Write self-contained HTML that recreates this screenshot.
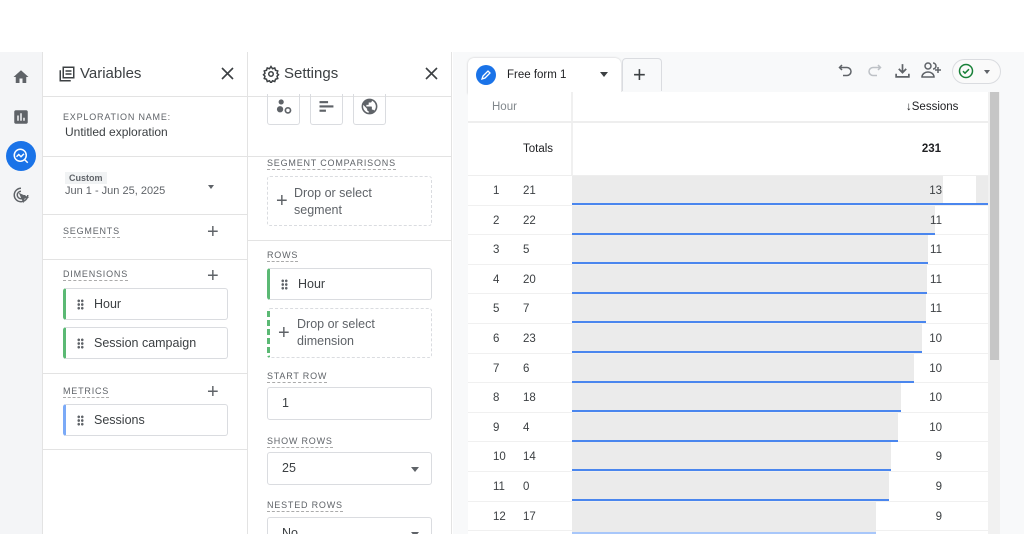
<!DOCTYPE html>
<html style="overflow:hidden;width:1024px;height:534px"><head><meta charset="utf-8"><style>
*{box-sizing:border-box;margin:0;padding:0}
body{width:1024px;height:534px;overflow:hidden;background:#fff;font-family:"Liberation Sans",Arial,sans-serif;color:#202124;position:relative}
.abs{position:absolute}
.rail{left:0;top:52px;width:43px;height:482px;background:#f4f5f7;border-right:1px solid #e3e3e3}
.panel{top:52px;height:482px;background:#fff;border-right:1px solid #e3e3e3;overflow:hidden}
.hdr{height:45px;border-bottom:1px solid #e3e3e3}
.lbl{font-size:9px;letter-spacing:.8px;color:#5f6368;border-bottom:1px dashed #aaa;display:inline-block;padding-bottom:1px}
.chip{position:absolute;height:32px;border:1px solid #dadce0;border-radius:3px;background:#fff;font-size:12.5px;color:#3c4043;line-height:30px;padding-left:28px}
.chip .dots{position:absolute;left:11px;top:10px;width:7px;height:11px;background:radial-gradient(circle,#5f6368 1.2px,transparent 1.4px) 0 0/3.5px 3.7px}
.sep{position:absolute;left:0;right:0;height:1px;background:#e3e3e3}
.plus{position:absolute;font-size:20px;color:#5f6368;font-weight:300;line-height:16px}
.input{position:absolute;left:267px;width:165px;height:33px;border:1px solid #dadce0;border-radius:3px;font-size:12.5px;line-height:31px;padding-left:14px;color:#3c4043}
.caret{position:absolute;right:12px;top:14px;border:4.5px solid transparent;border-top:5px solid #5f6368;border-bottom:0}
.row{position:absolute;left:468px;width:520px;height:29.6px;border-bottom:1px solid #f0f0f0;font-size:11.5px;color:#3c4043}
.row .n{position:absolute;left:25px;top:9px}
.row .h{position:absolute;left:55px;top:9px}
.row .bar{position:absolute;left:104px;top:0;height:29px;background:#ebebeb;border-bottom:2px solid #4a86ee}
.row .v{position:absolute;left:400px;width:74px;text-align:right;top:9px}
</style></head><body>
<div class="abs rail"></div>
<svg class="abs" style="left:12px;top:68px" width="18" height="18" viewBox="0 0 24 24"><path d="M10 20v-6h4v6h5v-8h3L12 3 2 12h3v8z" fill="#5f6368"/></svg>
<svg class="abs" style="left:12px;top:108px" width="18" height="18" viewBox="0 0 24 24"><path d="M19 3H5c-1.1 0-2 .9-2 2v14c0 1.1.9 2 2 2h14c1.1 0 2-.9 2-2V5c0-1.1-.9-2-2-2zM9 17H7v-7h2v7zm4 0h-2V7h2v10zm4 0h-2v-4h2v4z" fill="#5f6368"/></svg>
<div class="abs" style="left:6px;top:141px;width:30px;height:30px;border-radius:50%;background:#1a73e8"></div>
<svg class="abs" style="left:12px;top:147px" width="18" height="18" viewBox="0 0 24 24" fill="none" stroke="#fff" stroke-width="2"><circle cx="11" cy="11" r="8"/><path d="M6 13l3-3 3 3 4-4M17 17l4 4"/></svg>
<svg class="abs" style="left:12px;top:186px" width="18" height="18" viewBox="0 0 24 24" fill="none" stroke="#5f6368" stroke-width="2"><path d="M12 3a9 9 0 1 0 9 9M12 7a5 5 0 1 0 5 5"/><path d="M11 11l9 4-4 1-1 4z" fill="#5f6368"/></svg>

<div class="abs panel" style="left:43px;width:205px">
 <div class="hdr"></div>
 <svg class="abs" style="left:15px;top:13px" width="18" height="18" viewBox="0 0 24 24" fill="none" stroke="#3c4043" stroke-width="2"><rect x="7" y="3" width="14" height="14"/><path d="M3 7v14h14M10 8h8M10 12h8"/></svg>
 <div class="abs" style="left:37px;top:13px;font-size:15px;color:#3c4043">Variables</div>
 <svg class="abs" style="left:178px;top:15px" width="13" height="13" viewBox="0 0 13 13" stroke="#3c4043" stroke-width="1.6"><path d="M1 1l11 11M12 1L1 12"/></svg>
 <div class="abs lbl" style="left:20px;top:60px;border:0">EXPLORATION NAME:</div>
 <div class="abs" style="left:22px;top:73px;font-size:12px;color:#3c4043">Untitled exploration</div>
 <div class="sep" style="top:104px"></div>
 <div class="abs" style="left:22px;top:120px;background:#f1f3f4;font-size:9px;font-weight:bold;color:#5f6368;padding:1px 4px">Custom</div>
 <div class="abs" style="left:22px;top:133px;font-size:11px;color:#5f6368">Jun 1 - Jun 25, 2025</div>
 <div class="abs" style="left:165px;top:133px;border:3px solid transparent;border-top:4px solid #5f6368"></div>
 <div class="sep" style="top:162px"></div>
 <div class="abs lbl" style="left:20px;top:174px">SEGMENTS</div>
 <div class="plus" style="left:164px;top:172px">+</div>
 <div class="sep" style="top:207px"></div>
 <div class="abs lbl" style="left:20px;top:217px">DIMENSIONS</div>
 <div class="plus" style="left:164px;top:216px">+</div>
 <div class="chip" style="left:20px;top:236px;width:165px;border-left:3px solid #5bb974"><span class="dots"></span>Hour</div>
 <div class="chip" style="left:20px;top:275px;width:165px;border-left:3px solid #5bb974"><span class="dots"></span>Session campaign</div>
 <div class="sep" style="top:321px"></div>
 <div class="abs lbl" style="left:20px;top:334px">METRICS</div>
 <div class="plus" style="left:164px;top:332px">+</div>
 <div class="chip" style="left:20px;top:352px;width:165px;border-left:3px solid #7baaf7"><span class="dots"></span>Sessions</div>
 <div class="sep" style="top:397px"></div>
</div>

<div class="abs panel" style="left:248px;width:204px">
 <div class="hdr"></div>
 <svg class="abs" style="left:14px;top:13px" width="18" height="18" viewBox="0 0 24 24" fill="none" stroke="#3c4043" stroke-width="2"><circle cx="12" cy="12" r="3"/><path d="M12 2l2 3 3-1 1 3 3 1-1 3 2 2-2 2 1 3-3 1-1 3-3-1-2 3-2-3-3 1-1-3-3-1 1-3-2-2 2-2-1-3 3-1 1-3 3 1z"/></svg>
 <div class="abs" style="left:36px;top:13px;font-size:15px;color:#3c4043">Settings</div>
 <svg class="abs" style="left:177px;top:15px" width="13" height="13" viewBox="0 0 13 13" stroke="#3c4043" stroke-width="1.6"><path d="M1 1l11 11M12 1L1 12"/></svg>
 <div class="abs" style="left:19px;top:42px;width:33px;height:31px;border:1px solid #dadce0;border-top:0;border-radius:0 0 3px 3px"></div>
 <div class="abs" style="left:62px;top:42px;width:33px;height:31px;border:1px solid #dadce0;border-top:0;border-radius:0 0 3px 3px"></div>
 <div class="abs" style="left:105px;top:42px;width:33px;height:31px;border:1px solid #dadce0;border-top:0;border-radius:0 0 3px 3px"></div>
 <svg class="abs" style="left:27px;top:46px" width="18" height="18" viewBox="0 0 16 16"><circle cx="5.5" cy="3.5" r="2.3" fill="#5f6368"/><circle cx="4.5" cy="10" r="2.8" fill="#5f6368"/><circle cx="11.5" cy="11" r="2.3" fill="none" stroke="#5f6368" stroke-width="1.5"/></svg>
 <svg class="abs" style="left:70px;top:48px" width="18" height="15" viewBox="0 0 16 14" fill="#5f6368"><rect x="1" y="1" width="8" height="2"/><rect x="1" y="5" width="13" height="2"/><rect x="1" y="9" width="6" height="2"/></svg>
 <svg class="abs" style="left:112px;top:45px" width="19" height="19" viewBox="0 0 24 24"><path d="M12 2a10 10 0 1 0 0 20 10 10 0 0 0 0-20zm-1 17.9A8 8 0 0 1 4.2 10L9 15v1c0 1.1.9 2 2 2zm6.9-2.5c-.3-.8-1-1.4-1.9-1.4h-1v-3c0-.6-.4-1-1-1H8v-2h2c.6 0 1-.4 1-1V7h2c1.1 0 2-.9 2-2v-.4a8 8 0 0 1 2.9 12.8z" fill="#5f6368"/></svg>
 <div class="sep" style="top:104px"></div>
 <div class="abs lbl" style="left:19px;top:106px">SEGMENT COMPARISONS</div>
 <div class="abs" style="left:19px;top:124px;width:165px;height:50px;border:1px dashed #dadce0;border-radius:3px"></div>
 <div class="plus" style="left:28px;top:141px">+</div>
 <div class="abs" style="left:46px;top:133px;font-size:12.5px;color:#5f6368;line-height:17px">Drop or select<br>segment</div>
 <div class="sep" style="top:188px"></div>
 <div class="abs lbl" style="left:19px;top:198px">ROWS</div>
 <div class="chip" style="left:19px;top:216px;width:165px;border-left:3px solid #5bb974"><span class="dots"></span>Hour</div>
 <div class="abs" style="left:19px;top:256px;width:165px;height:50px;border:1px dashed #dadce0;border-left:3px dashed #5bb974;border-radius:3px"></div>
 <div class="plus" style="left:30px;top:273px">+</div>
 <div class="abs" style="left:49px;top:264px;font-size:12.5px;color:#5f6368;line-height:17px">Drop or select<br>dimension</div>
 <div class="abs lbl" style="left:19px;top:319px">START ROW</div>
 <div class="input" style="left:19px;top:335px">1</div>
 <div class="abs lbl" style="left:19px;top:384px">SHOW ROWS</div>
 <div class="input" style="left:19px;top:400px">25<span class="caret"></span></div>
 <div class="abs lbl" style="left:19px;top:448px">NESTED ROWS</div>
 <div class="input" style="left:19px;top:465px">No<span class="caret"></span></div>
</div>

<div class="abs" style="left:453px;top:52px;width:571px;height:482px;background:#f8f9fa"></div>
<div class="abs" style="left:468px;top:58px;width:153px;height:36px;background:#fff;border-radius:6px 6px 0 0;box-shadow:0 0 2px rgba(0,0,0,.2)"></div>
<div class="abs" style="left:476px;top:65px;width:20px;height:20px;border-radius:50%;background:#1a73e8"></div>
<svg class="abs" style="left:480px;top:69px" width="12" height="12" viewBox="0 0 12 12"><path d="M2 10l1-3 5-5 2 2-5 5z" fill="none" stroke="#fff" stroke-width="1.3"/></svg>
<div class="abs" style="left:507px;top:69px;font-size:11.5px;color:#202124">Free form 1</div>
<div class="abs" style="left:600px;top:72px;border:4px solid transparent;border-top:5px solid #3c4043"></div>
<div class="abs" style="left:622px;top:58px;width:40px;height:33px;background:#f8f9fa;border:1px solid #dadce0;border-bottom:0;border-radius:4px 4px 0 0"></div>
<div class="plus" style="left:633px;top:67px;font-size:22px;color:#3c4043">+</div>
<svg class="abs" style="left:838px;top:63px" width="16" height="16" viewBox="0 0 16 16" fill="none" stroke="#5f6368" stroke-width="1.5"><path d="M4 2L1.5 4.5 4 7M2 4.5h7a4 4 0 0 1 0 8H5"/></svg>
<svg class="abs" style="left:866px;top:63px" width="16" height="16" viewBox="0 0 16 16" fill="none" stroke="#bdc1c6" stroke-width="1.5"><path d="M12 2l2.5 2.5L12 7M14 4.5H7a4 4 0 0 0 0 8h4"/></svg>
<svg class="abs" style="left:894px;top:62px" width="17" height="17" viewBox="0 0 16 16" fill="none" stroke="#5f6368" stroke-width="1.6"><path d="M8 2v8M4.5 6.5L8 10l3.5-3.5M2 11v3h12v-3"/></svg>
<svg class="abs" style="left:921px;top:61px" width="22" height="18" viewBox="0 0 22 18" fill="none" stroke="#5f6368" stroke-width="1.5"><circle cx="7" cy="5" r="3"/><path d="M1 16c0-3 3-5 6-5s6 2 6 5zM12 2a3 3 0 0 1 0 6M17 6v6M14 9h6"/></svg>
<div class="abs" style="left:952px;top:59px;width:49px;height:25px;border:1px solid #dadce0;border-radius:13px;background:#fafafa"></div>
<svg class="abs" style="left:958px;top:63px" width="16" height="16" viewBox="0 0 16 16" fill="none" stroke="#188038" stroke-width="1.5"><circle cx="8" cy="8" r="6.5"/><path d="M5 8.2l2 2 4-4"/></svg>
<div class="abs" style="left:984px;top:70px;border:3.5px solid transparent;border-top:4px solid #5f6368"></div>

<div class="abs" style="left:468px;top:92px;width:520px;height:442px;background:#fff"></div>
<div class="abs" style="left:571px;top:92px;width:2px;height:84px;background:#f0f0f0"></div>
<div class="abs" style="left:468px;top:121px;width:520px;height:2px;background:#eee"></div>
<div class="abs" style="left:492px;top:101px;font-size:11.5px;color:#80868b">Hour</div>
<div class="abs" style="left:906px;top:101px;font-size:11.5px;color:#202124">↓Sessions</div>
<div class="abs" style="left:523px;top:143px;font-size:11.5px;color:#202124;font-weight:500">Totals</div>
<div class="abs" style="left:900px;top:143px;width:41px;text-align:right;font-size:11.5px;font-weight:bold;color:#202124">231</div>
<div class="abs" style="left:468px;top:175px;width:520px;height:1px;background:#eee"></div>

<div class="row" style="top:176px"><span class="n">1</span><span class="h">21</span><span class="bar" style="width:371px"></span><span class="v">13</span></div>
<div class="abs" style="left:943px;top:203px;width:45px;height:2px;background:#4a86ee"></div>
<div class="abs" style="left:976px;top:176px;width:12px;height:27px;background:#ebebeb"></div>
<div class="row" style="top:205.6px"><span class="n">2</span><span class="h">22</span><span class="bar" style="width:363px"></span><span class="v">11</span></div>
<div class="row" style="top:235.2px"><span class="n">3</span><span class="h">5</span><span class="bar" style="width:356px"></span><span class="v">11</span></div>
<div class="row" style="top:264.8px"><span class="n">4</span><span class="h">20</span><span class="bar" style="width:355px"></span><span class="v">11</span></div>
<div class="row" style="top:294.4px"><span class="n">5</span><span class="h">7</span><span class="bar" style="width:354px"></span><span class="v">11</span></div>
<div class="row" style="top:324px"><span class="n">6</span><span class="h">23</span><span class="bar" style="width:350px"></span><span class="v">10</span></div>
<div class="row" style="top:353.6px"><span class="n">7</span><span class="h">6</span><span class="bar" style="width:342px"></span><span class="v">10</span></div>
<div class="row" style="top:383.2px"><span class="n">8</span><span class="h">18</span><span class="bar" style="width:329px"></span><span class="v">10</span></div>
<div class="row" style="top:412.8px"><span class="n">9</span><span class="h">4</span><span class="bar" style="width:326px"></span><span class="v">10</span></div>
<div class="row" style="top:442.4px"><span class="n">10</span><span class="h">14</span><span class="bar" style="width:319px"></span><span class="v">9</span></div>
<div class="row" style="top:472px"><span class="n">11</span><span class="h">0</span><span class="bar" style="width:317px"></span><span class="v">9</span></div>
<div class="row" style="top:501.6px"><span class="n">12</span><span class="h">17</span><span class="bar" style="width:304px;height:32px;border-bottom-color:#a8c7fa"></span><span class="v">9</span></div>
<div class="abs" style="left:988px;top:92px;width:12px;height:442px;background:#f1f1f1"></div>
<div class="abs" style="left:990px;top:92px;width:9px;height:268px;background:#c6c6c6"></div>
</body></html>
